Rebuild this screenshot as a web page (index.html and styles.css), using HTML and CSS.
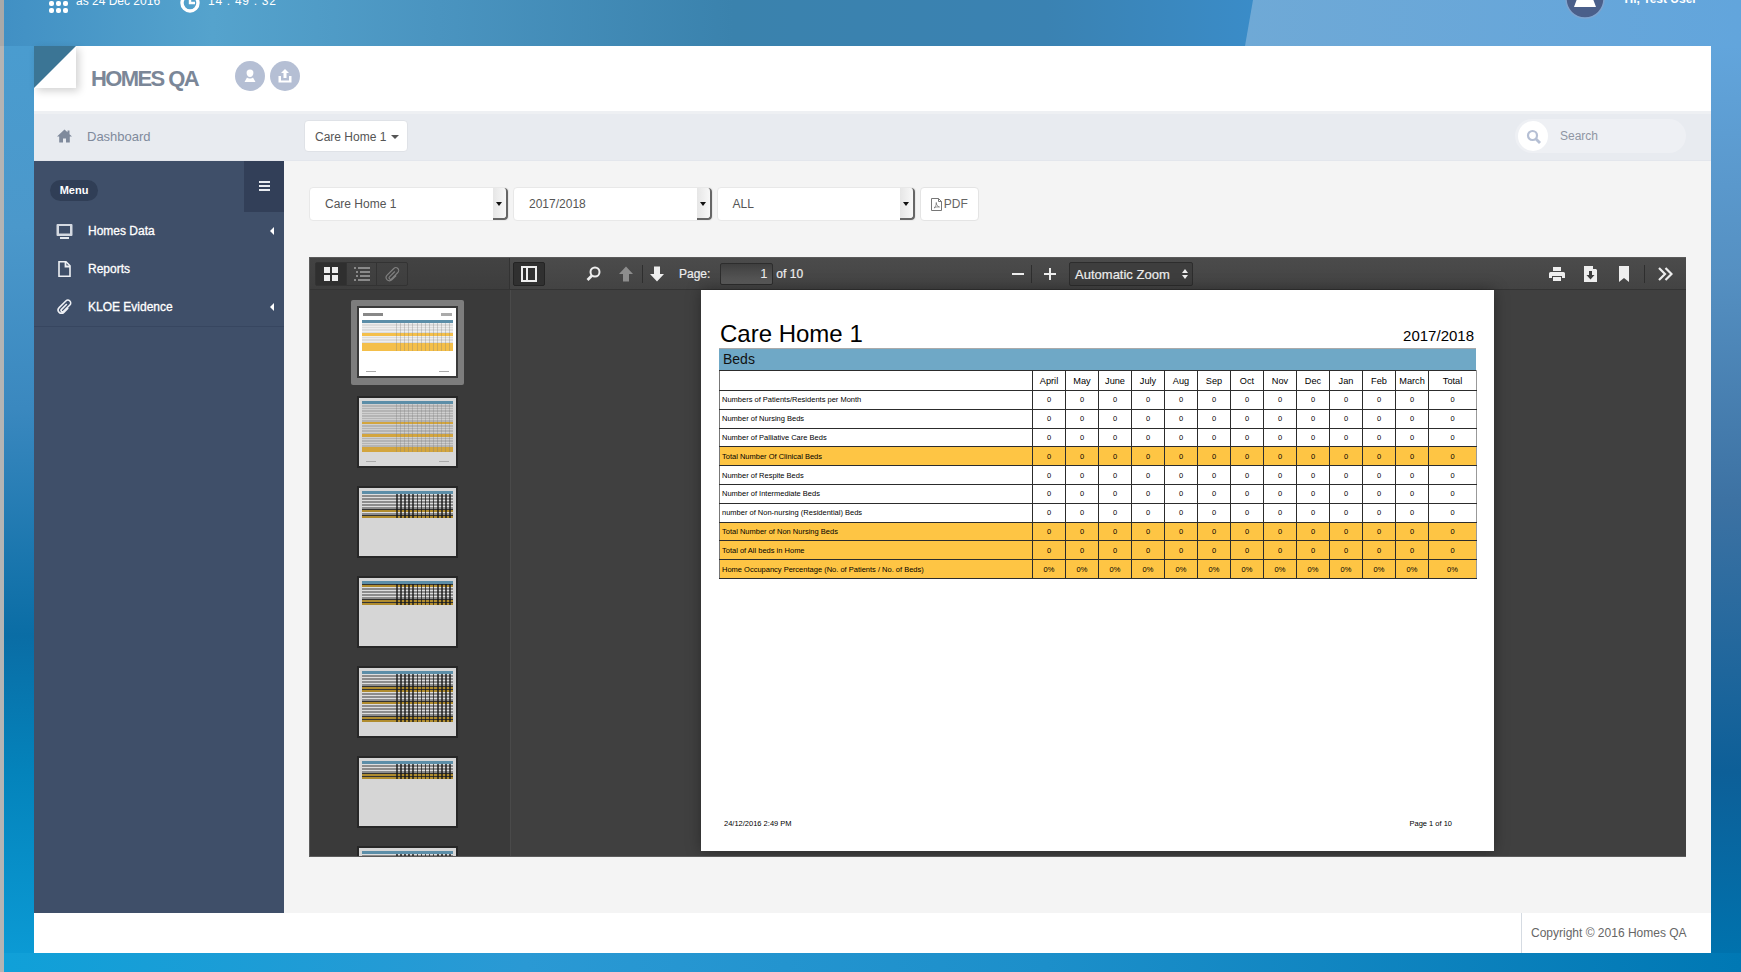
FILE: index.html
```html
<!DOCTYPE html>
<html lang="en">
<head>
    <meta charset="UTF-8">
    <title>Homes QA</title>
    <link rel="stylesheet" href="styles.css">
</head>
<body>

    <div class="topbar">
        <div class="top-panel"></div>
        <div class="top-info">
            <svg class="top-grid" width="20" height="13" viewBox="0 0 20 13" fill="#fff"><rect x="0" y="0" width="5" height="5" rx="2"/><rect x="7" y="0" width="5" height="5" rx="2"/><rect x="14" y="0" width="5" height="5" rx="2"/><rect x="0" y="7" width="5" height="5" rx="2"/><rect x="7" y="7" width="5" height="5" rx="2"/><rect x="14" y="7" width="5" height="5" rx="2"/></svg>
            <span class="top-date">as 24 Dec 2016</span>
            <svg class="top-clock" width="20" height="24" viewBox="0 0 20 24"><circle cx="10" cy="13" r="8" fill="none" stroke="#fff" stroke-width="3.4"/><path d="M10 8v5h5" fill="none" stroke="#fff" stroke-width="2.4"/></svg>
            <span class="top-time">14 : 49 : 32</span>
        </div>
        <div class="top-user">
            <svg class="top-avatar" width="40" height="40" viewBox="0 0 40 40"><circle cx="20" cy="20" r="19" fill="#4a5f8a" stroke="#7fa4cf" stroke-width="1.5"/><path d="M20 6c4 0 6 3 6 7 0 3 3 9 5 15H9c2-6 5-12 5-15 0-4 2-7 6-7z" fill="#fff"/></svg>
            <span class="top-hi">Hi, Test User</span>
        </div>
    </div>

    <div class="middle">
        <div class="gutter-left"></div>
        <div class="app">

            <div class="header">
                <div class="corner"><div class="corner-fold"></div></div>
                <span class="logo">HOMES QA</span>
                <span class="round-btn">
                    <svg width="16" height="16" viewBox="0 0 16 16" fill="#fff"><path d="M8 1.5a3.4 3.4 0 0 1 3.4 3.6c0 2-1.3 4-3.4 4S4.600 7.100 4.600 5.100A3.400 3.400 0 0 1 8 1.500zM5 9.500c.8.800 1.900 1.100 3 1.100s2.200-.3 3-1.100l2.500 4.500h-11z"/></svg>
                </span>
                <span class="round-btn">
                    <svg width="16" height="16" viewBox="0 0 16 16" fill="#fff"><path d="M8 1l4 4H9.500v5h-3V5H4z"/><path d="M1.500 8H4v4.500h8V8h2.500v6.500h-13z"/></svg>
                </span>
            </div>

            <div class="navbar">
                <div class="crumb">
                    <svg width="15" height="14" viewBox="0 0 15 14" fill="#7f8a9c"><path d="M7.500 .5L0 7.500h2.200v6h3.800V9.500h3v4h3.800v-6H15L12.500 5.200V1.500h-2v1.800z"/></svg>
                    <span>Dashboard</span>
                </div>
                <div class="home-btn">Care Home 1 <i class="caret"></i></div>
                <div class="search">
                    <span class="search-icon">
                        <svg width="15" height="15" viewBox="0 0 15 15" fill="none" stroke="#b5bfd4" stroke-width="2.200"><circle cx="6.500" cy="6.500" r="4.500"/><path d="M10 10l4 4" stroke-width="2.800"/></svg>
                    </span>
                    <span class="search-text">Search</span>
                </div>
            </div>

            <div class="body">
                <div class="sidebar">
                    <div class="side-top">
                        <span class="menu-pill">Menu</span>
                        <span class="side-toggle"><i></i><i></i><i></i></span>
                    </div>
                    <div class="side-item">
                        <svg width="17" height="16" viewBox="0 0 17 16"><path d="M1.500 1h14a1 1 0 0 1 1 1v10a1 1 0 0 1-1 1h-14a1 1 0 0 1-1-1V2a1 1 0 0 1 1-1z" fill="#d4d9e1"/><rect x="3" y="3" width="11" height="7.500" fill="#3f4f69"/><rect x="4" y="14" width="9" height="2" fill="#e4e8ee"/></svg>
                        <span>Homes Data</span>
                        <i class="side-arrow"></i>
                    </div>
                    <div class="side-item">
                        <svg width="17" height="16" viewBox="0 0 17 16"><path d="M3 .8h7l4 4v10.400H3z" fill="none" stroke="#eef0f4" stroke-width="1.600"/><path d="M9.500 1v4.500H14" fill="none" stroke="#eef0f4" stroke-width="1.800"/></svg>
                        <span>Reports</span>
                    </div>
                    <div class="side-item side-item-last">
                        <svg width="17" height="18" viewBox="0 0 18 18"><path d="M8.500 5v8a1.500 1.500 0 0 0 3 0V3.500a3 3 0 0 0-6 0V13.500a3.500 3.500 0 0 0 7 0V7" fill="none" stroke="#eef0f4" stroke-width="1.700" transform="rotate(45 9 9)"/></svg>
                        <span>KLOE Evidence</span>
                        <i class="side-arrow"></i>
                    </div>
                </div>

                <div class="content">
                    <div class="filters">
                        <div class="select"><span>Care Home 1</span><i class="select-arrow"></i></div>
                        <div class="select"><span>2017/2018</span><i class="select-arrow"></i></div>
                        <div class="select select-last"><span>ALL</span><i class="select-arrow"></i></div>
                        <div class="pdf-btn">
                            <svg width="11" height="13" viewBox="0 0 11 13" fill="none" stroke="#777"><path d="M.5.500h7l3 3v9H.5z"/><path d="M7.500.500v3h3"/><path d="M3 10c1.500-1 2.500-3.500 2.300-5.500C5 6.500 6.500 8.500 8.500 9 6.500 8.700 4.500 9 3 10z" stroke-width=".8"/></svg>
                            PDF
                        </div>
                    </div>

                    <div class="viewer">
                        <div class="viewer-bar">
                            <div class="bar-left">
                                <div class="seg">
                                    <span class="seg-btn seg-active">
                                        <svg width="16" height="16" viewBox="0 0 16 16" fill="#eee"><rect x="1" y="1" width="6" height="6"/><rect x="9" y="1" width="6" height="6"/><rect x="1" y="9" width="6" height="6"/><rect x="9" y="9" width="6" height="6"/></svg>
                                    </span>
                                    <span class="seg-btn">
                                        <svg width="16" height="16" viewBox="0 0 16 16" fill="#8a8a8a"><rect x="0" y="1" width="2" height="2"/><rect x="4" y="1" width="12" height="2"/><rect x="2" y="5" width="2" height="2"/><rect x="6" y="5" width="10" height="2"/><rect x="2" y="9" width="2" height="2"/><rect x="6" y="9" width="10" height="2"/><rect x="0" y="13" width="2" height="2"/><rect x="4" y="13" width="12" height="2"/></svg>
                                    </span>
                                    <span class="seg-btn">
                                        <svg width="17" height="17" viewBox="0 0 18 18"><path d="M8.500 5v8a1.500 1.500 0 0 0 3 0V3.500a3 3 0 0 0-6 0V13.500a3.500 3.500 0 0 0 7 0V7" fill="none" stroke="#808080" stroke-width="1.200" transform="rotate(45 9 9)"/></svg>
                                    </span>
                                </div>
                            </div>
                            <div class="bar-main">
                                <span class="tool-box">
                                    <svg width="16" height="16" viewBox="0 0 16 16" fill="none" stroke="#eee" stroke-width="2"><rect x="1" y="1" width="14" height="14"/><path d="M6 1v14"/></svg>
                                </span>
                                <svg class="tool-search" width="15" height="15" viewBox="0 0 15 15" fill="none" stroke="#eee" stroke-width="2"><circle cx="9" cy="6" r="4.500"/><path d="M6 9.500L1.500 14" stroke-width="2.600"/></svg>
                                <svg class="tool-up" width="14" height="16" viewBox="0 0 14 16" fill="#8d8d8d"><path d="M7 .5L14 8H10V15.500H4V8H0z"/></svg>
                                <i class="tool-sep"></i>
                                <svg class="tool-down" width="14" height="16" viewBox="0 0 14 16" fill="#eee"><path d="M7 15.500L14 8H10V.5H4V8H0z"/></svg>
                                <span class="page-label">Page:</span>
                                <span class="page-input">1</span>
                                <span class="page-of">of 10</span>
                                <svg class="tool-minus" width="12" height="12" viewBox="0 0 12 12" fill="#eee"><rect x="0" y="5" width="12" height="2"/></svg>
                                <i class="tool-sep tool-sep-zoom"></i>
                                <svg class="tool-plus" width="12" height="12" viewBox="0 0 12 12" fill="#eee"><rect x="0" y="5" width="12" height="2"/><rect x="5" y="0" width="2" height="12"/></svg>
                                <span class="zoom-select">Automatic Zoom <svg width="6" height="10" viewBox="0 0 6 10" fill="#eee"><path d="M3 0l3 4H0zM3 10l3-4H0z"/></svg></span>
                                <svg class="tool-print" width="16" height="16" viewBox="0 0 16 16" fill="#eee"><path d="M4 1h8v4H4z"/><path d="M1.500 6h13A1.500 1.500 0 0 1 16 7.500V12h-3v-2H3v2H0V7.500A1.500 1.500 0 0 1 1.500 6z"/><path d="M4 11h8v4H4z"/></svg>
                                <svg class="tool-save" width="13" height="16" viewBox="0 0 13 16" fill="#eee"><path d="M0 0h9v3h3l1 1v12H0z"/><path d="M5 5h3v4h2.500l-4 4.500-4-4.500H5z" fill="#3d3d3d"/></svg>
                                <svg class="tool-mark" width="10" height="16" viewBox="0 0 10 16" fill="#eee"><path d="M0 0h10v16L5 12l-5 4z"/></svg>
                                <i class="tool-sep tool-sep-more"></i>
                                <svg class="tool-more" width="15" height="14" viewBox="0 0 15 14" fill="none" stroke="#eee" stroke-width="2.200"><path d="M1 1l6 6-6 6M7.500 1l6 6-6 6"/></svg>
                            </div>
                        </div>

                        <div class="viewer-body">
                            <div class="thumbs">
                                <div class="thumb-selected">
                                    <div class="thumb thumb-light">
                                        <div class="thumb-title"></div>
                                        <div class="mini mini-light">
                                            <b></b><i></i><i></i><i></i><i></i><i class="yel"></i><i></i><i></i><i></i><i class="yel"></i><i class="yel"></i><i class="yel"></i>
                                        </div>
                                        <div class="thumb-foot"></div>
                                    </div>
                                </div>
                                <div class="thumb thumb-mid">
                                    <div class="mini mini-light">
                                        <b></b><i></i><i></i><i></i><i></i><i></i><i></i><i></i><i class="yel"></i><i></i><i></i><i></i><i></i><i class="yel"></i><i></i><i></i><i></i><i></i><i class="yel"></i><i class="yel"></i>
                                    </div>
                                    <div class="thumb-foot"></div>
                                </div>
                                <div class="thumb">
                                    <div class="mini">
                                        <b></b><i></i><i></i><i></i><i></i><i></i><i class="yel"></i><i></i><i class="yel"></i>
                                    </div>
                                </div>
                                <div class="thumb">
                                    <div class="mini">
                                        <b></b><i class="yel"></i><i></i><i></i><i></i><i></i><i class="yel"></i><i class="yel"></i>
                                    </div>
                                </div>
                                <div class="thumb">
                                    <div class="mini">
                                        <b></b><i></i><i></i><i></i><i></i><i class="yel"></i><i class="yel"></i><i></i><i></i><i></i><i class="yel"></i><i></i><i></i><i></i><i></i><i class="yel"></i><i class="yel"></i>
                                    </div>
                                </div>
                                <div class="thumb">
                                    <div class="mini">
                                        <b></b><i></i><i></i><i></i><i class="yel"></i><i class="yel"></i>
                                    </div>
                                </div>
                                <div class="thumb">
                                    <div class="mini">
                                        <b></b><i></i><i></i><i></i>
                                    </div>
                                </div>
                            </div>

                            <div class="pages">
                                <div class="page">
                                    <div class="page-head">
                                        <span class="page-title">Care Home 1</span>
                                        <span class="page-year">2017/2018</span>
                                    </div>
                                    <div class="page-band">Beds</div>
                                    <table class="beds">
                                        <tr class="beds-head"><th></th><th>April</th><th>May</th><th>June</th><th>July</th><th>Aug</th><th>Sep</th><th>Oct</th><th>Nov</th><th>Dec</th><th>Jan</th><th>Feb</th><th>March</th><th>Total</th></tr>
                                        <tr><td>Numbers of Patients/Residents per Month</td><td>0</td><td>0</td><td>0</td><td>0</td><td>0</td><td>0</td><td>0</td><td>0</td><td>0</td><td>0</td><td>0</td><td>0</td><td>0</td></tr>
                                        <tr><td>Number of Nursing Beds</td><td>0</td><td>0</td><td>0</td><td>0</td><td>0</td><td>0</td><td>0</td><td>0</td><td>0</td><td>0</td><td>0</td><td>0</td><td>0</td></tr>
                                        <tr><td>Number of Palliative Care Beds</td><td>0</td><td>0</td><td>0</td><td>0</td><td>0</td><td>0</td><td>0</td><td>0</td><td>0</td><td>0</td><td>0</td><td>0</td><td>0</td></tr>
                                        <tr class="total"><td>Total Number Of Clinical Beds</td><td>0</td><td>0</td><td>0</td><td>0</td><td>0</td><td>0</td><td>0</td><td>0</td><td>0</td><td>0</td><td>0</td><td>0</td><td>0</td></tr>
                                        <tr><td>Number of Respite Beds</td><td>0</td><td>0</td><td>0</td><td>0</td><td>0</td><td>0</td><td>0</td><td>0</td><td>0</td><td>0</td><td>0</td><td>0</td><td>0</td></tr>
                                        <tr><td>Number of Intermediate Beds</td><td>0</td><td>0</td><td>0</td><td>0</td><td>0</td><td>0</td><td>0</td><td>0</td><td>0</td><td>0</td><td>0</td><td>0</td><td>0</td></tr>
                                        <tr><td>number of Non-nursing (Residential) Beds</td><td>0</td><td>0</td><td>0</td><td>0</td><td>0</td><td>0</td><td>0</td><td>0</td><td>0</td><td>0</td><td>0</td><td>0</td><td>0</td></tr>
                                        <tr class="total"><td>Total Number of Non Nursing Beds</td><td>0</td><td>0</td><td>0</td><td>0</td><td>0</td><td>0</td><td>0</td><td>0</td><td>0</td><td>0</td><td>0</td><td>0</td><td>0</td></tr>
                                        <tr class="total"><td>Total of All beds in Home</td><td>0</td><td>0</td><td>0</td><td>0</td><td>0</td><td>0</td><td>0</td><td>0</td><td>0</td><td>0</td><td>0</td><td>0</td><td>0</td></tr>
                                        <tr class="total"><td>Home Occupancy Percentage (No. of Patients / No. of Beds)</td><td>0%</td><td>0%</td><td>0%</td><td>0%</td><td>0%</td><td>0%</td><td>0%</td><td>0%</td><td>0%</td><td>0%</td><td>0%</td><td>0%</td><td>0%</td></tr>
                                    </table>
                                    <div class="page-foot">
                                        <span>24/12/2016 2:49 PM</span>
                                        <span>Page 1 of 10</span>
                                    </div>
                                </div>
                            </div>
                        </div>
                    </div>
                </div>
            </div>

            <div class="footer">
                <div class="copyright">Copyright © 2016 Homes QA</div>
            </div>
        </div>
        <div class="gutter-right"></div>
    </div>

    <div class="bottombar"></div>

</body>
</html>
```

FILE: styles.css
```css
* {
    box-sizing: border-box;
}

html, body {
    margin: 0;
    height: 972px;
    overflow: hidden;
}

body {
    font-family: "Liberation Sans", Arial, sans-serif;
    background-color: #2f86bd;
    color: #555;
}

/* top strip, the text is cut off by the top of the window */
.topbar {
    height: 46px;
    position: relative;
    overflow: hidden;
    display: flex;
    justify-content: space-between;
    border-left: 4px solid #a9a9a9;
    background: linear-gradient(90deg, #4190c4 0%, #55a3cd 12%, #4a94c0 25%, #3a82ad 42%, #3a82b2 60%, #3a8cc8 72%);
}

.top-panel {
    position: absolute;
    top: 0;
    bottom: 0;
    left: 1241px;
    right: 0;
    background: linear-gradient(90deg, #6fa9d6, #62a5dc);
    clip-path: polygon(8px 0, 100% 0, 100% 100%, 0 100%);
}

.top-info {
    position: relative;
    display: flex;
    align-items: flex-start;
    padding-left: 45px;
    margin-top: -10px;
    color: #fff;
    font-size: 12px;
}

.top-grid {
    margin-top: 11px;
}

.top-date {
    margin-left: 7px;
    line-height: 23px;
}

.top-clock {
    margin-left: 20px;
}

.top-time {
    margin-left: 8px;
    line-height: 23px;
    letter-spacing: .7px;
}

.top-user {
    position: relative;
    display: flex;
    align-items: flex-start;
    margin-top: -21px;
    padding-right: 44px;
    color: #fff;
    font-size: 12px;
    font-weight: bold;
}

.top-avatar {
    margin-right: 1px;
}

.top-hi {
    margin-left: 19px;
    margin-top: 13px;
    line-height: 15px;
}

.middle {
    height: 907px;
    display: flex;
}

.gutter-left {
    width: 34px;
    border-left: 4px solid #b4b4b4;
    background: linear-gradient(180deg, #4a9ccf 0%, #4b98cb 20%, #3a88bf 40%, #0a6da5 65%, #0483bb 80%, #0b9ad4 100%);
}

.gutter-right {
    width: 30px;
    background: linear-gradient(180deg, #62a5dc 0%, #5590c2 25%, #3d72a3 50%, #0d5f98 80%, #0072ad 100%);
}

.bottombar {
    height: 19px;
    border-left: 4px solid #b4b4b4;
    background: linear-gradient(90deg, #10a0d8 0%, #2a99d4 30%, #1c8fca 60%, #0078b4 100%);
}

.app {
    flex: 1;
    min-width: 0;
    display: flex;
    flex-direction: column;
    background-color: #ffffff;
}

/* header */
.header {
    height: 65px;
    flex: none;
    display: flex;
    align-items: flex-start;
    position: relative;
}

.corner {
    width: 42px;
    height: 42px;
    background-color: #3b7595;
    box-shadow: 3px 3px 8px rgba(0, 0, 0, .18);
}

.corner-fold {
    width: 42px;
    height: 42px;
    background-color: #fff;
    clip-path: polygon(100% 0, 100% 100%, 0 100%);
}

.logo {
    margin: 19px 37px 0 15px;
    font-size: 22px;
    line-height: 28px;
    font-weight: bold;
    letter-spacing: -1.600px;
    color: #7b8798;
}

.round-btn {
    width: 30px;
    height: 30px;
    margin: 15px 5px 0 0;
    border-radius: 50%;
    background-color: #b5bfd4;
    display: flex;
    align-items: center;
    justify-content: center;
}

/* second row */
.navbar {
    height: 50px;
    flex: none;
    display: flex;
    align-items: center;
    padding-bottom: 2px;
    background-color: #e8ebf0;
    border-top: 3px solid #eef0f3;
    border-bottom: 1px solid #e3e6ec;
}

.crumb {
    width: 250px;
    padding-left: 23px;
    display: flex;
    align-items: center;
    gap: 15px;
    color: #7f8a9c;
    font-size: 13px;
}

.home-btn {
    margin-left: 20px;
    width: 104px;
    height: 32px;
    line-height: 32px;
    padding-left: 10px;
    background-color: #fff;
    border: 1px solid #dfe2e7;
    border-radius: 4px;
    font-size: 12px;
    color: #555;
}

.caret {
    display: inline-block;
    margin-left: 1px;
    vertical-align: 2px;
    border-top: 4px solid #555;
    border-left: 4px solid transparent;
    border-right: 4px solid transparent;
}

.search {
    margin-left: auto;
    margin-right: 25px;
    width: 171px;
    height: 34px;
    padding-left: 3px;
    display: flex;
    align-items: center;
    background-color: #eef0f4;
    border-radius: 17px;
    font-size: 12px;
    color: #8f96a3;
}

.search-icon {
    width: 30px;
    height: 30px;
    border-radius: 50%;
    background-color: #fff;
    display: flex;
    align-items: center;
    justify-content: center;
}

.search-text {
    margin-left: 12px;
}

/* main row */
.body {
    flex: 1;
    min-height: 0;
    display: flex;
}

.sidebar {
    width: 250px;
    flex: none;
    background-color: #3f4f69;
    color: #fff;
}

.side-top {
    height: 51px;
    display: flex;
    justify-content: space-between;
}

.menu-pill {
    margin: 19px 0 0 16px;
    width: 48px;
    height: 21px;
    line-height: 21px;
    text-align: center;
    border-radius: 11px;
    background-color: #303e56;
    font-size: 11px;
    font-weight: bold;
}

.side-toggle {
    width: 40px;
    background-color: #323f58;
    display: flex;
    flex-direction: column;
    align-items: center;
    padding-top: 20px;
    gap: 2px;
}

.side-toggle i {
    width: 11px;
    height: 2px;
    background-color: #e8ebf0;
}

.side-item {
    height: 38px;
    display: flex;
    align-items: center;
    padding: 0 10px 0 22px;
    font-size: 12px;
    -webkit-text-stroke: .3px #fff;
}

.side-item span {
    margin-left: 15px;
}

.side-item-last {
    height: 39px;
    border-bottom: 1px solid #374660;
}

.side-arrow {
    margin-left: auto;
    border-right: 4px solid #fff;
    border-top: 4px solid transparent;
    border-bottom: 4px solid transparent;
}

.content {
    flex: 1;
    min-width: 0;
    padding: 26px 25px 0;
    background-color: #f4f4f4;
}

/* dropdowns above the viewer */
.filters {
    display: flex;
    gap: 4px;
    height: 34px;
}

.select {
    width: 200px;
    display: flex;
    align-items: center;
    justify-content: space-between;
    padding-left: 15px;
    background-color: #fff;
    border: 1px solid #e8e8e8;
    border-radius: 4px;
    font-size: 12px;
    color: #555;
}

.select-last {
    width: 199.500px;
    margin-left: -.5px;
}

.select-arrow {
    width: 15px;
    height: 100%;
    position: relative;
    background: linear-gradient(90deg, #e6e6e6, #f8f8f8);
    border-right: 2px solid #666;
    border-bottom: 2px solid #666;
    border-radius: 0 4px 4px 0;
}

.select-arrow::after {
    content: "";
    position: absolute;
    top: 14px;
    left: 3px;
    border-top: 4px solid #111;
    border-left: 3px solid transparent;
    border-right: 3px solid transparent;
}

.pdf-btn {
    width: 58.500px;
    display: flex;
    align-items: center;
    justify-content: center;
    gap: 2px;
    background-color: #fff;
    border: 1px solid #e4e4e4;
    border-radius: 4px;
    font-size: 12px;
    color: #666;
}

/* pdf viewer */
.viewer {
    margin-top: 36px;
    height: 600px;
    display: flex;
    flex-direction: column;
    background-color: #3c3c3c;
    border-left: 1px solid #5c5c5c;
    border-bottom: 1px solid #5c5c5c;
    overflow: hidden;
}

.viewer-bar {
    height: 33px;
    flex: none;
    display: flex;
    background: linear-gradient(180deg, #4b4b4b, #434343);
    border-top: 1px solid #5a5a5a;
    border-bottom: 1px solid #333;
    color: #eee;
    font-size: 12px;
}

.bar-left {
    width: 200px;
    flex: none;
    padding: 4px 0 0 5px;
    border-right: 1px solid #333;
    background: linear-gradient(180deg, #434343, #3d3d3d);
}

.seg {
    display: flex;
    width: 93px;
    height: 24px;
    border: 1px solid #333;
    border-radius: 2px;
}

.seg-btn {
    flex: 1;
    display: flex;
    align-items: center;
    justify-content: center;
    border-right: 1px solid #333;
}

.seg-btn:last-child {
    border-right: none;
}

.seg-active {
    background-color: #2f2f2f;
}

.bar-main {
    flex: 1;
    min-width: 0;
    display: flex;
    align-items: center;
    padding-left: 3px;
}

.tool-box {
    width: 32px;
    height: 24px;
    display: flex;
    align-items: center;
    justify-content: center;
    background-color: #303030;
    border: 1px solid #242424;
    border-radius: 2px;
}

.tool-search {
    margin-left: 41px;
}

.tool-up {
    margin-left: 18px;
}

.tool-sep {
    width: 1px;
    height: 18px;
    margin-left: 9px;
    background-color: #2e2e2e;
}

.tool-down {
    margin-left: 7px;
}

.page-label {
    margin-left: 15px;
    -webkit-text-stroke: .2px #eee;
}

.page-input {
    width: 53px;
    height: 22px;
    line-height: 20px;
    margin-left: 10px;
    padding-right: 5px;
    text-align: right;
    background: linear-gradient(180deg, #3f3f3f, #5c5c5c);
    border: 1px solid #2d2d2d;
    border-radius: 2px;
    font-size: 13px;
}

.page-of {
    margin-left: 3px;
    -webkit-text-stroke: .2px #eee;
}

.tool-minus {
    margin-left: 209px;
}

.tool-sep-zoom {
    margin-left: 7px;
}

.tool-plus {
    margin-left: 12px;
}

.zoom-select {
    width: 124px;
    height: 24px;
    margin-left: 13px;
    padding-left: 5px;
    padding-top: 1px;
    display: flex;
    align-items: center;
    gap: 12px;
    font-size: 13px;
    -webkit-text-stroke: .2px #eee;
    border: 1px solid #2d2d2d;
    border-radius: 2px;
    background-color: #3e3e3e;
}

.tool-print {
    margin-left: auto;
}

.tool-save {
    margin-left: 19px;
}

.tool-mark {
    margin-left: 22px;
}

.tool-sep-more {
    margin-left: 15px;
}

.tool-more {
    margin: 0 13px 0 13px;
}

.viewer-body {
    flex: 1;
    min-height: 0;
    display: flex;
}

.thumbs {
    width: 201px;
    flex: none;
    padding: 10px 6px 0 0;
    display: flex;
    flex-direction: column;
    align-items: center;
    background-color: #3a3a3a;
    border-right: 1px solid #4a4a4a;
    overflow: hidden;
}

.thumb {
    width: 101px;
    height: 72px;
    flex: none;
    margin-bottom: 18px;
    padding: 1px;
    background-color: #d6d6d6;
    border: 2px solid #272727;
    display: flex;
    flex-direction: column;
}

.thumb-selected {
    width: 113px;
    height: 85px;
    flex: none;
    margin-bottom: 11px;
    padding: 6px;
    background-color: #7d7d7d;
    border-radius: 2px;
}

.thumb-light {
    margin: 0;
    background-color: #fff;
    border-color: #3a3a3a;
}

.thumb-mid {
    background-color: #d8d8d8;
}

.thumb-title {
    height: 3px;
    margin: 4px 3px 2px;
    background: linear-gradient(90deg, #888 0 22%, transparent 22% 88%, #aaa 88%);
}

.thumb-foot {
    height: 1px;
    margin: auto 6px 3px;
    background: linear-gradient(90deg, #aaa 0 12%, transparent 12% 88%, #aaa 88%);
}

/* tiny tables inside the page thumbnails */
.mini {
    position: relative;
    margin: 2px 2px 0;
}

.mini b {
    display: block;
    height: 3px;
    background-color: #5c8ea8;
}

.mini i {
    display: block;
    height: 3px;
    background-color: #8c8c8c;
    border-top: 1px solid #dedede;
}

.mini i.yel {
    background-color: #b08c2e;
    border-top-color: #333;
}

.mini::after {
    content: "";
    position: absolute;
    top: 3px;
    bottom: 0;
    left: 38%;
    right: 0;
    background: repeating-linear-gradient(90deg, rgba(20, 20, 20, .7) 0 1.500px, transparent 1.500px 4.100px);
}

.mini-light i {
    height: 2.500px;
    background-color: #dcdcdc;
    border-top: 1px solid #eee;
}

.mini-light i.yel {
    background-color: #f4bf4a;
    border-top-color: #f4bf4a;
}

.mini-light::after {
    background: repeating-linear-gradient(90deg, rgba(120, 120, 120, .3) 0 1px, transparent 1px 4.100px);
}

.thumb-mid .mini-light i {
    background-color: #b4b4b4;
    border-top-color: #cfcfcf;
}

.thumb-mid .mini-light i.yel {
    background-color: #d3a53e;
    border-top-color: #d3a53e;
}

.pages {
    flex: 1;
    min-width: 0;
    display: flex;
    justify-content: center;
    padding-right: 2px;
    background-color: #404040;
}

.page {
    width: 793px;
    height: 561px;
    flex: none;
    display: flex;
    flex-direction: column;
    padding: 32px 18px 0 18px;
    background-color: #fff;
    box-shadow: 0 0 14px rgba(0, 0, 0, .35);
    color: #000;
}

.page-head {
    height: 26px;
    padding: 0 3px 1px 1px;
    display: flex;
    justify-content: space-between;
    align-items: flex-end;
}

.page-title {
    font-size: 24px;
    line-height: 26px;
}

.page-year {
    font-size: 15px;
    line-height: 23px;
    margin-right: -1px;
}

.page-band {
    height: 23px;
    line-height: 21px;
    padding-left: 4px;
    background-color: #6fa8c6;
    border-top: 1px solid #aaa;
    border-bottom: 1px solid #777;
    font-size: 14px;
    color: #111;
}

.beds {
    width: 757px;
    margin-top: -1px;
    table-layout: fixed;
    border-collapse: collapse;
    font-size: 7.500px;
}

.beds th, .beds td {
    width: 33px;
    height: 18.800px;
    padding: 0;
    border: 1px solid #2c2c2c;
    text-align: center;
    font-weight: normal;
}

.beds th {
    height: 20px;
}

.beds th:first-child, .beds td:first-child {
    width: 313px;
    padding-left: 2px;
    text-align: left;
    border-left-color: #777;
}

.beds th:last-child, .beds td:last-child {
    width: 48px;
    border-right-color: #999;
}

.beds-head th {
    font-size: 9.200px;
}

.total {
    background-color: #fec544;
}

.page-foot {
    margin-top: auto;
    margin-bottom: 23px;
    padding: 0 24px 0 5px;
    display: flex;
    justify-content: space-between;
    font-size: 7.500px;
    line-height: 9px;
}

.footer {
    height: 40px;
    flex: none;
    display: flex;
    justify-content: flex-end;
    background-color: #fff;
}

.copyright {
    width: 190px;
    padding: 0 0 0 9px;
    line-height: 40px;
    border-left: 1px solid #d5dbe2;
    font-size: 12px;
    color: #666;
}
```
